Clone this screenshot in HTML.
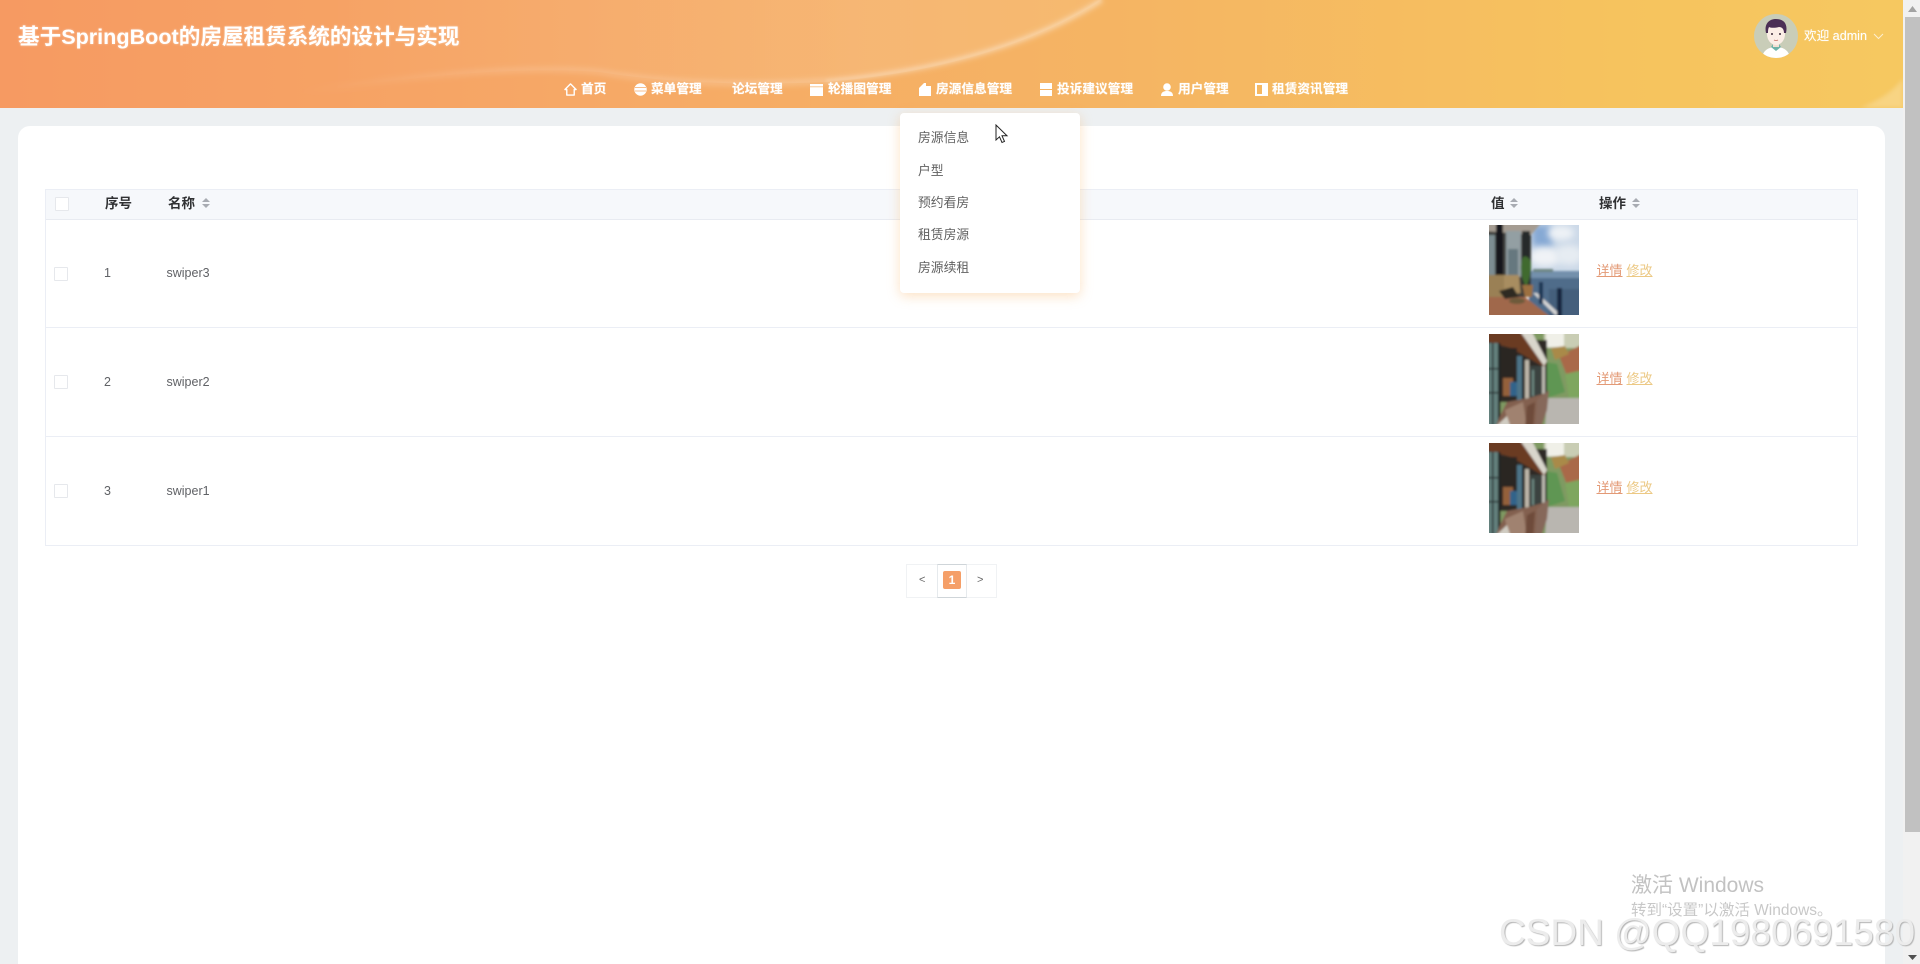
<!DOCTYPE html>
<html lang="zh-CN">
<head>
<meta charset="utf-8">
<title>基于SpringBoot的房屋租赁系统的设计与实现</title>
<style>
html,body{margin:0;padding:0;width:1920px;height:964px;overflow:hidden;background:#edf0f2;}
body{position:relative;font-family:"Liberation Sans","Noto Sans CJK SC",sans-serif;color:#606266;}
.a{position:absolute;white-space:nowrap;line-height:1;}
#hdr{position:absolute;left:0;top:0;width:1903px;height:108px;background:linear-gradient(90deg,#f69a62 0%,#f6a866 30%,#f5b563 60%,#f6c35e 85%,#f6c860 100%);overflow:hidden;}
#title{left:18px;top:26px;font-size:21.6px;font-weight:bold;color:#fff;text-shadow:0 0 2px rgba(255,255,255,.5);}
.nav{top:82.5px;font-size:12.7px;font-weight:bold;color:#fff;text-shadow:0 0 1px rgba(255,255,255,.6);}
.ic{position:absolute;fill:#fff;}
#card{position:absolute;left:18px;top:126px;width:1867px;height:860px;background:#fff;border-radius:12px;}
#tbl{position:absolute;left:45px;top:189px;width:1811px;height:355px;border:1px solid #ebeef5;}
#th{position:absolute;left:46px;top:190px;width:1811px;height:29px;background:#f6f8fb;border-bottom:1px solid #e8ebf1;}
.rl{position:absolute;left:46px;width:1811px;height:1px;background:#ebeef5;}
.cb{position:absolute;width:12px;height:12px;border:1px solid #e6e8ec;background:#fff;border-radius:1px;}
.h{font-size:13.5px;font-weight:bold;color:#303133;top:197px;}
.c{font-size:12.5px;color:#606266;}
.l1,.l2{font-size:13px;text-decoration:underline;}
.l1{color:#e39a76;}
.l2{color:#ecc985;}
#dd{position:absolute;left:900px;top:113px;width:180px;height:180px;background:#fff;border-radius:4px;box-shadow:0 3px 12px rgba(246,176,96,.38);}
.dm{left:918px;font-size:12.8px;color:#606060;}
#sb{position:absolute;left:1903px;top:0;width:17px;height:964px;background:#f1f1f1;}
#th2{position:absolute;left:2px;top:17px;width:15px;height:815px;background:#c1c1c1;}
#pg{position:absolute;left:906px;top:564px;width:89px;height:32px;border:1px solid #f0f2f4;}
</style>
</head>
<body>
<svg width="0" height="0" style="position:absolute">
  <defs>
    <symbol id="sort" viewBox="0 0 8 10"><path d="M4 0L8 4H0Z" fill="#a8abb2"/><path d="M4 10L0 6H8Z" fill="#a8abb2"/></symbol>
    <filter id="bl" x="-8%" y="-8%" width="116%" height="116%"><feGaussianBlur stdDeviation="1"/></filter>
    <filter id="bc" x="-50%" y="-50%" width="200%" height="200%"><feGaussianBlur stdDeviation="3.5"/></filter>
    <filter id="bs"><feGaussianBlur stdDeviation="3"/></filter>
    <clipPath id="clip90"><rect width="90" height="90"/></clipPath>
    <symbol id="bld" viewBox="0 0 90 90">
      <g clip-path="url(#clip90)"><g filter="url(#bl)">
        <rect x="-4" y="-4" width="98" height="98" fill="#7f9a62"/>
        <rect x="55" y="-4" width="40" height="18" fill="#c9cdb4"/>
        <rect x="57" y="-4" width="18" height="17" fill="#f0f0e8"/>
        <path d="M70 22L94 10V36L78 42Z" fill="#a9694a"/>
        <path d="M62 14L76 12L80 20L66 26Z" fill="#a98a4a"/>
        <path d="M56 28L68 30L76 58L58 64Z" fill="#5f9653"/>
        <path d="M76 40L94 36V64H80Z" fill="#7ea65f"/>
        <path d="M58 64H94V94H56Z" fill="#b9b6b0"/>
        <rect x="-4" y="6" width="62" height="62" fill="#2e2c27"/>
        <path d="M-4 -4H30L58 30L55 33L22 14L-4 7Z" fill="#6a3a20"/>
        <path d="M30 -4H42L58 27L55 32Z" fill="#d9d6cc"/>
        <rect x="-4" y="9" width="15" height="85" fill="#64807d"/>
        <rect x="3" y="9" width="1.5" height="85" fill="#1c2222"/>
        <rect x="9" y="9" width="2.5" height="85" fill="#1c2222"/>
        <rect x="-4" y="34" width="15" height="1.5" fill="#2c3333"/>
        <rect x="-4" y="58" width="15" height="1.5" fill="#2c3333"/>
        <rect x="12" y="14" width="16" height="50" fill="#2a2722"/>
        <rect x="14" y="44" width="10" height="18" fill="#94603a"/>
        <rect x="21" y="48" width="7" height="14" fill="#31648a"/>
        <rect x="28" y="22" width="5" height="46" fill="#4d7488"/>
        <rect x="33" y="24" width="2" height="44" fill="#23211d"/>
        <rect x="36" y="26" width="4" height="40" fill="#bfb8aa"/>
        <rect x="40" y="32" width="12" height="32" fill="#3b4340"/>
        <rect x="43" y="36" width="2" height="26" fill="#6f8b84"/>
        <rect x="53" y="32" width="3" height="32" fill="#bdbcb2"/>
        <path d="M11 82L18 68L40 64L60 58L56 74L50 94H6Z" fill="#836050"/>
        <path d="M16 76L34 68L38 94H20Z" fill="#a08270"/>
        <path d="M38 72L46 68L44 94H36Z" fill="#6e4c3a"/>
        <path d="M48 66L60 56L58 76L52 94H46Z" fill="#86685a"/>
        <path d="M5 94L18 82L22 94Z" fill="#d0ccc2"/>
      </g></g>
    </symbol>
    <symbol id="sea" viewBox="0 0 90 90">
      <g clip-path="url(#clip90)">
        <rect width="90" height="50" fill="#ccd9e8"/>
        <path d="M42 0H62L64 22H44Z" fill="#86a9d4" filter="url(#bc)"/>
        <ellipse cx="72" cy="8" rx="13" ry="7" fill="#eef2f6" filter="url(#bc)"/>
        <ellipse cx="56" cy="32" rx="16" ry="9" fill="#f0f3f6" filter="url(#bc)"/>
        <ellipse cx="80" cy="30" rx="14" ry="10" fill="#e6ecf2" filter="url(#bc)"/>
        <g filter="url(#bl)">
        <rect x="40" y="46" width="54" height="48" fill="#506c8a"/>
        <rect x="40" y="46" width="54" height="7" fill="#7390ac"/>
        <rect x="60" y="64" width="34" height="30" fill="#445e7b"/>
        <rect x="44" y="44" width="20" height="3" fill="#6e8582"/>
        <rect x="-4" y="-4" width="46" height="76" fill="#3c3c3a"/>
        <path d="M-4 -4H54L42 10L-4 6Z" fill="#a59c92"/>
        <rect x="-4" y="10" width="10" height="42" fill="#7d8d92"/>
        <rect x="7" y="-4" width="7" height="98" fill="#17191a"/>
        <rect x="17" y="6" width="15" height="46" fill="#939fa3"/>
        <rect x="19" y="24" width="10" height="28" fill="#66787f"/>
        <rect x="33" y="6" width="8" height="60" fill="#26292a"/>
        <path d="M-4 50H30L32 68L14 72H-4Z" fill="#9a8055"/>
        <rect x="15" y="50" width="15" height="18" fill="#a88d60"/>
        <path d="M34 32C38 30 42 34 42 40C42 48 40 56 38 60L36 60C32 52 30 40 34 32Z" fill="#3f6a2e"/>
        <path d="M33 60H44L43 72L36 72Z" fill="#9c6f40"/>
        <path d="M-4 72H36L64 94H-4Z" fill="#a0684c"/>
        <ellipse cx="28" cy="76" rx="8" ry="3" fill="#6d5a3a"/>
        <path d="M10 66L24 62L30 72L16 74Z" fill="#2e2a24"/>
        <path d="M44 68L48 68L72 90H66Z" fill="#d4d4d4"/>
        <rect x="50" y="57" width="4" height="22" fill="#1d3553"/>
        <rect x="68" y="63" width="5" height="31" fill="#14263f"/>
        </g>
      </g>
    </symbol>
  </defs>
</svg>

<div id="hdr">
  <svg width="1903" height="108" style="position:absolute;left:0;top:0">
    <defs>
      <linearGradient id="sw" x1="0" x2="1" y1="0" y2="0">
        <stop offset="0" stop-color="#fff" stop-opacity="0"/>
        <stop offset=".25" stop-color="#fff" stop-opacity=".16"/>
        <stop offset=".7" stop-color="#fff" stop-opacity=".26"/>
        <stop offset="1" stop-color="#fff" stop-opacity=".34"/>
      </linearGradient>
      <linearGradient id="fillg" x1="0" x2="1" y1="0" y2="0">
        <stop offset="0" stop-color="#fff" stop-opacity="0"/>
        <stop offset=".7" stop-color="#fff" stop-opacity=".1"/>
        <stop offset="1" stop-color="#fff" stop-opacity=".07"/>
      </linearGradient>
    </defs>
    <path d="M320 0H1102C1040 40 950 72 826 82C740 86 660 82 600 72C520 66 420 76 320 90Z" fill="url(#fillg)"/>
    <path d="M300 92C400 78 520 64 600 72C670 84 750 86 826 81C950 70 1040 40 1102 0" fill="none" stroke="url(#sw)" stroke-width="5" filter="url(#bs)"/>
    <path d="M826 81C950 70 1040 40 1102 0" fill="none" stroke="#fff" stroke-opacity=".2" stroke-width="3" style="filter:blur(1.5px)"/>
    <path d="M1903 78V108H1860C1880 100 1895 90 1903 78Z" fill="#fff" fill-opacity=".22" style="filter:blur(2px)"/>
  </svg>
  <div class="a" id="title">基于SpringBoot的房屋租赁系统的设计与实现</div>

  <svg class="ic" style="left:564px;top:83px" width="13" height="13" viewBox="0 0 14 14"><path d="M7 1L13 7H11V13H3V7H1Z" fill="none" stroke="#fff" stroke-width="1.5" stroke-linejoin="round"/></svg>
  <div class="a nav" style="left:581px">首页</div>

  <svg class="ic" style="left:634px;top:83px" width="13" height="13" viewBox="0 0 13 13"><circle cx="6.5" cy="6.5" r="6.2"/><path d="M1 4.5H12M1 8H12" stroke="#f6ab68" stroke-width=".7"/></svg>
  <div class="a nav" style="left:651px">菜单管理</div>

  <div class="a nav" style="left:732px">论坛管理</div>

  <svg class="ic" style="left:810px;top:84px" width="13" height="12" viewBox="0 0 13 12"><rect width="13" height="12"/><rect y="2.5" width="13" height=".7" fill="#f6b168"/></svg>
  <div class="a nav" style="left:828px">轮播图管理</div>

  <svg class="ic" style="left:919px;top:83px" width="12" height="13" viewBox="0 0 12 13"><path d="M0 5L5 0H7V3H12V13H0Z"/></svg>
  <div class="a nav" style="left:936px">房源信息管理</div>

  <svg class="ic" style="left:1040px;top:83px" width="12" height="13" viewBox="0 0 12 13"><rect width="12" height="6"/><rect y="7" width="12" height="6"/></svg>
  <div class="a nav" style="left:1057px">投诉建议管理</div>

  <svg class="ic" style="left:1161px;top:83px" width="12" height="13" viewBox="0 0 12 13"><circle cx="6" cy="4" r="3.8"/><path d="M0 13C0 9 3 8 6 8S12 9 12 13Z"/></svg>
  <div class="a nav" style="left:1178px">用户管理</div>

  <svg class="ic" style="left:1255px;top:83px" width="13" height="13" viewBox="0 0 13 13"><path d="M0 0H13V13H0ZM2 2V11H7V2Z" fill-rule="evenodd"/></svg>
  <div class="a nav" style="left:1272px">租赁资讯管理</div>

  <svg style="position:absolute;left:1754px;top:14px" width="44" height="44" viewBox="0 0 44 44">
    <defs><clipPath id="av"><circle cx="22" cy="22" r="22"/></clipPath></defs>
    <g clip-path="url(#av)">
      <rect width="44" height="44" fill="#c9cdb8"/>
      <path d="M8 44C9 36 15 33 22 33S35 36 36 44Z" fill="#fff"/>
      <path d="M17 33L22 37L27 33L25 30H19Z" fill="#6fb3a8"/>
      <rect x="19" y="26" width="6" height="7" fill="#f3dfd3"/>
      <ellipse cx="22" cy="20" rx="9" ry="11" fill="#fbeee6"/>
      <path d="M12 19C10 10 15 5 22 5C30 5 34 10 32 19L30 19C30 15 28 13 25 13C21 14 17 14 15 13C14 15 14 17 14 19Z" fill="#4b2f55"/>
      <circle cx="18" cy="20" r="1" fill="#3a2a3a"/><circle cx="26" cy="20" r="1" fill="#3a2a3a"/>
      <path d="M20 26Q22 27.2 24 26" stroke="#c9776c" stroke-width=".8" fill="none"/>
    </g>
  </svg>
  <div class="a" style="left:1804px;top:29.5px;font-size:12.6px;color:#fff;text-shadow:0 0 1px rgba(255,255,255,.5)">欢迎 admin</div>
  <svg style="position:absolute;left:1873px;top:33px" width="11" height="7" viewBox="0 0 11 7"><path d="M1 1L5.5 5.5L10 1" fill="none" stroke="#fff" stroke-opacity=".7" stroke-width="1"/></svg>
</div>

<div id="card"></div>
<div id="tbl"></div>
<div id="th"></div>
<div class="rl" style="top:327px"></div>
<div class="rl" style="top:436px"></div>

<div class="cb" style="left:55px;top:197px"></div>
<div class="a h" style="left:105px">序号</div>
<div class="a h" style="left:168px">名称</div>
<svg style="position:absolute;left:202px;top:198px" width="8" height="10"><use href="#sort"/></svg>
<div class="a h" style="left:1491px">值</div>
<svg style="position:absolute;left:1510px;top:198px" width="8" height="10"><use href="#sort"/></svg>
<div class="a h" style="left:1599px">操作</div>
<svg style="position:absolute;left:1632px;top:198px" width="8" height="10"><use href="#sort"/></svg>

<div class="cb" style="left:54px;top:267px"></div>
<div class="a c" style="left:104px;top:267px">1</div>
<div class="a c" style="left:166.5px;top:267px">swiper3</div>
<svg style="position:absolute;left:1489px;top:225px" width="90" height="90"><use href="#sea"/></svg>
<div class="a l1" style="left:1596.5px;top:264px">详情</div>
<div class="a l2" style="left:1626.5px;top:264px">修改</div>

<div class="cb" style="left:54px;top:375px"></div>
<div class="a c" style="left:104px;top:376px">2</div>
<div class="a c" style="left:166.5px;top:376px">swiper2</div>
<svg style="position:absolute;left:1489px;top:334px" width="90" height="90"><use href="#bld"/></svg>
<div class="a l1" style="left:1596.5px;top:372px">详情</div>
<div class="a l2" style="left:1626.5px;top:372px">修改</div>

<div class="cb" style="left:54px;top:484px"></div>
<div class="a c" style="left:104px;top:485px">3</div>
<div class="a c" style="left:166.5px;top:485px">swiper1</div>
<svg style="position:absolute;left:1489px;top:443px" width="90" height="90"><use href="#bld"/></svg>
<div class="a l1" style="left:1596.5px;top:481px">详情</div>
<div class="a l2" style="left:1626.5px;top:481px">修改</div>

<div id="pg"></div>
<div style="position:absolute;left:937px;top:564px;width:28px;height:32px;border-left:1px solid #e6eaed;border-right:1px solid #e6eaed;border-top:1px solid #cfd5d9;border-bottom:1px solid #cfd5d9;background:#fff;"></div>
<div class="a" style="left:919px;top:575px;font-size:11px;color:#666">&lt;</div>
<div class="a" style="left:943px;top:571px;width:18px;height:18px;line-height:18px;text-align:center;background:#f59f68;color:#fff;font-size:12px;font-weight:bold;border-radius:2px">1</div>
<div class="a" style="left:977px;top:575px;font-size:11px;color:#666">&gt;</div>

<div id="dd"></div>
<div class="a dm" style="top:132px">房源信息</div>
<div class="a dm" style="top:165px">户型</div>
<div class="a dm" style="top:197px">预约看房</div>
<div class="a dm" style="top:229px">租赁房源</div>
<div class="a dm" style="top:262px">房源续租</div>
<svg style="position:absolute;left:995px;top:124px" width="14" height="21" viewBox="0 0 14 21"><path d="M1 1V16L4.5 12.8L7 18.5L9.5 17.4L7 11.8H12Z" fill="#fff" stroke="#222" stroke-width="1"/></svg>

<div id="sb">
  <div id="th2"></div>
  <svg style="position:absolute;left:5px;top:6px" width="9" height="6"><path d="M4.5 0L9 6H0Z" fill="#a3a3a3"/></svg>
  <svg style="position:absolute;left:5px;top:955px" width="9" height="5"><path d="M0 0H9L4.5 5Z" fill="#505050"/></svg>
</div>

<div class="a" style="left:1631px;top:875px;font-size:21px;color:#c2c2c2">激活 Windows</div>
<div class="a" style="left:1631px;top:903px;font-size:15.5px;color:#c8c8c8">转到“设置”以激活 Windows。</div>
<div class="a" style="left:1499px;top:914px;font-size:37px;color:#ececec;text-shadow:1px 1px 1px #b4b4b4">CSDN @QQ1980691580</div>
</body>
</html>
